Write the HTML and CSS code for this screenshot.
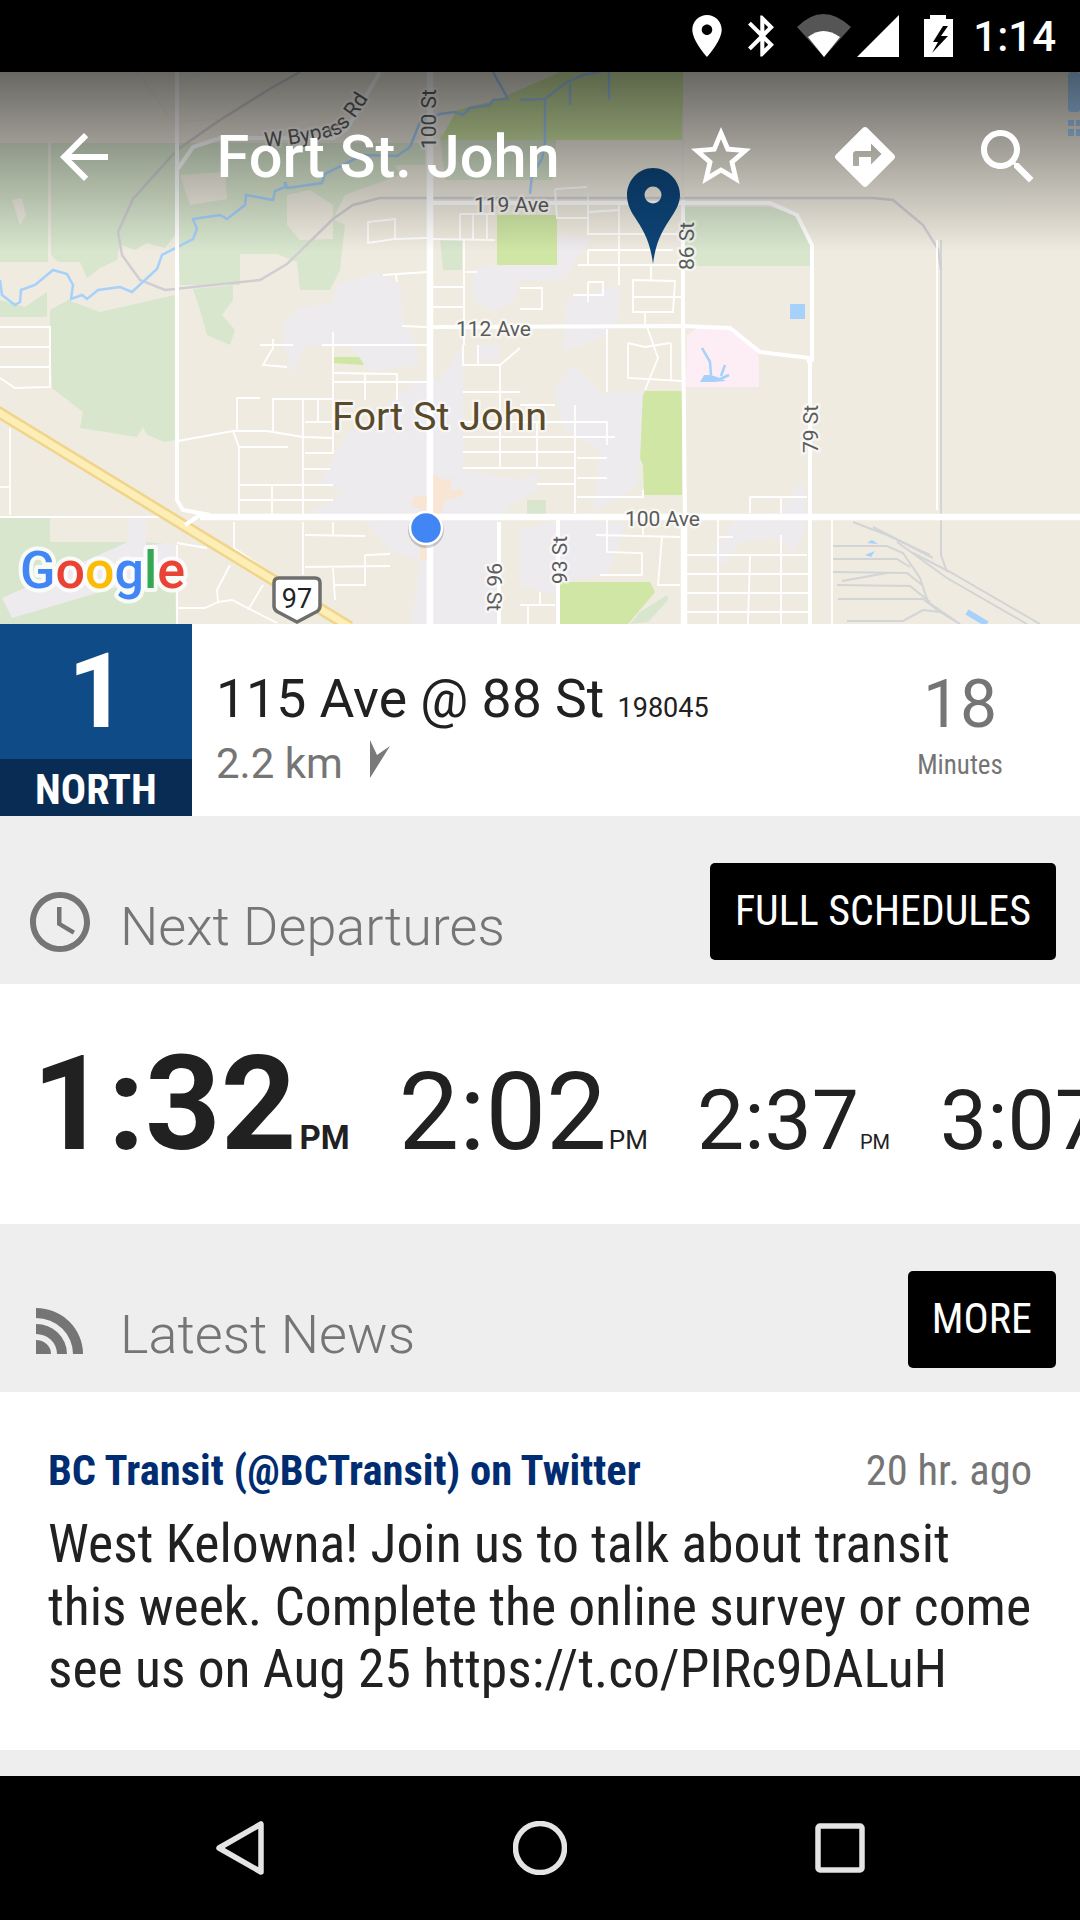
FILE: index.html
```html
<!DOCTYPE html>
<html>
<head>
    <title>Fort St. John</title>
    <link rel="stylesheet" href="styles.css">
</head>
<body>
<div class="phone">
    <div class="status-bar">
        <svg class="st-pin" viewBox="5 2 14 20"><path d="M12 2C8.13 2 5 5.13 5 9c0 5.25 7 13 7 13s7-7.75 7-13c0-3.87-3.13-7-7-7zm0 9.5c-1.38 0-2.5-1.12-2.5-2.5s1.12-2.5 2.5-2.5 2.5 1.12 2.5 2.5-1.12 2.5-2.5 2.5z"/></svg>
        <svg class="st-bt" viewBox="5 2 12.71 20"><path d="M17.71 7.71L12 2h-1v7.59L6.41 5 5 6.41 10.59 12 5 17.59 6.41 19 11 14.41V22h1l5.71-5.71-4.3-4.29 4.3-4.29zM13 5.83l1.88 1.88L13 9.59V5.83zm1.88 10.46L13 18.17v-3.76l1.88 1.88z"/></svg>
        <svg class="st-wifi" viewBox="0 0 54 43"><path class="wifi-back" d="M0 13Q26 -13 54 13L27 43z"/><path d="M11 23Q26 11 43 23L27 43z"/></svg>
        <svg class="st-signal" viewBox="0 0 42 42"><path d="M0 42L42 0V42z"/></svg>
        <svg class="st-battery" viewBox="0 0 29 42"><path d="M6 0H22V4H29V42H0V4H6z"/><path class="bolt" d="M19 11L9 27H14L8 38L24 21H17L24 11z"/></svg>
        <span class="st-time">1:14</span>
    </div>

    <div class="map">
        <svg class="map-svg" viewBox="0 72 1080 552">
            <rect x="0" y="72" width="1080" height="552" fill="#efebe0"/>

            <!-- parks and woods -->
            <g class="m-green">
                <polygon points="0,143 48,143 48,262 0,262"/>
                <polygon points="51,143 175,143 175,235 165,248 147,243 135,250 120,245 117,260 100,268 87,278 80,262 58,262 51,255"/>
                <polygon points="178,143 425,143 425,165 395,165 400,175 345,195 333,219 345,225 340,270 330,290 300,290 297,262 277,254 240,254 240,285 180,285 178,235"/>
                <polygon points="193,289 233,285 233,300 222,315 235,330 230,345 207,335 200,310"/>
                <polygon points="50,310 68,300 100,312 175,295 175,440 165,442 147,435 143,427 137,437 80,428 83,412 52,388 50,345"/>
                <polygon points="0,317 47,317 47,292 25,307 0,300"/>
                <polygon points="0,518 50,518 50,542 145,542 175,545 176,624 0,624"/>
                <polygon points="685,207 770,207 797,215 810,245 810,266 685,266"/>
                <polygon points="527,500 546,500 546,514 527,514"/>
                <polygon points="640,612 667,595 668,600 648,622 630,624"/>
                <polygon points="440,135 557,135 552,180 445,180"/>
                <polygon points="440,240 462,240 462,270 443,270"/>
            </g>
            <g class="m-tan">
                <polygon points="180,175 225,172 227,199 190,205"/>
                <polygon points="287,195 310,190 333,205 333,239 300,240 287,225"/>
                <polygon points="12,200 22,198 26,215 20,225"/>
            </g>
            <g class="m-park">
                <polygon points="497,215 557,215 557,265 497,265"/>
                <polygon points="640,402 645,391 682,391 682,495 644,495 643,465 640,458"/>
                <polygon points="560,582 650,582 655,592 628,624 560,624"/>
                <polygon points="333,357 365,357 363,365 333,363"/>
                <polygon points="433,609 468,609 467,620 433,620"/>
                <polygon points="457,110 497,100 560,72 683,72 683,140 440,140"/>
            </g>

            <!-- built up areas -->
            <g class="m-urban">
                <polygon points="283,325 300,309 333,302 337,285 377,272 400,285 403,320 417,345 418,365 370,372 350,345 305,345 293,375 283,345"/>
                <polygon points="347,435 370,420 417,380 440,380 463,345 463,470 520,480 537,472 537,490 520,500 510,505 498,520 495,624 412,624 420,560 390,552 367,522 307,512 333,502 343,492 320,482"/>
                <polygon points="557,235 592,239 577,259 563,280 520,280 515,300 495,312 473,300 473,270 490,265 557,265"/>
                <polygon points="567,299 617,285 620,295 617,322 600,339 563,352"/>
                <polygon points="557,385 573,365 600,393 643,391 640,460 637,485 593,512 593,520 625,525 607,575 560,582 556,595 520,585 520,530 593,512 600,450 565,430 557,405"/>
                <polygon points="713,558 733,522 780,512 797,485 805,485 806,505 805,532 793,552 777,537 740,542 723,565"/>
                <polygon points="2,598 128,542 128,518 146,518 146,545 175,543 175,570 12,618"/>
                <polygon points="478,345 500,345 500,360 478,360"/>
            </g>
            <polygon class="m-pink" points="687,335 697,328 730,328 757,352 759,358 759,387 686,387"/>
            <polygon class="m-airport" points="433,475 445,480 452,478 450,490 463,490 463,496 445,500 440,516 433,516 412,505 413,497 430,495"/>
            <rect class="m-airport" x="420" y="540" width="8" height="20"/>

            <!-- rail and ring road -->
            <g class="m-rail">
                <polyline points="833,546 887,546 903,553 920,578 928,602 960,624"/>
                <polyline points="833,559 897,559 910,567"/>
                <polyline points="833,572 907,573 922,585"/>
                <polyline points="842,581 887,573"/>
                <polyline points="837,585 910,586 930,602"/>
                <polyline points="838,599 923,599 940,612"/>
                <polyline points="847,621 903,621 923,610 940,612 960,624"/>
                <polyline points="853,522 887,535 930,555"/>
                <polyline points="873,527 933,558"/>
                <polyline points="897,542 947,578 1027,624"/>
                <polyline points="913,553 950,572 1040,624"/>
                <polyline points="941,240 941,555 947,572"/>
            </g>
            <polyline class="m-ring" points="300,72 273,87 220,120 177,150 133,199 118,232 122,255 140,280 165,290 260,280 287,264 333,219 353,205 380,198 873,198 893,200 923,225 938,249 941,270"/>

            <!-- water -->
            <g class="m-river">
                <polyline points="0,280 2,295 15,305 20,302 21,290 35,285 53,270 67,274 73,285 71,299 82,295 87,299 98,290 120,287 132,292 157,269 162,255 193,239 197,229 193,219 220,215 227,219 245,205 246,195 273,200 275,191 285,187 285,182 287,188 322,183 325,174 363,155 397,156 410,147 420,122 440,114 455,112 463,115 470,108 490,105 493,100 508,99 493,72"/>
                <polyline points="545,100 545,142 542,159 532,175 530,194"/>
                <polyline points="520,100 545,99 567,82 583,75 600,72"/>
                <polyline points="570,84 570,105"/>
                <polyline points="609,72 609,100"/>
                <polyline points="702,348 710,362 711,375"/>
                <polyline points="721,376 725,365"/>
                <polyline points="718,380 729,375"/>
                <polyline class="m-canal" points="967,612 987,624"/>
            </g>
            <polygon class="m-water" points="700,382 704,375 711,375 720,378 726,381 713,382"/>
            <rect class="m-water" x="790" y="304" width="15" height="15"/>
            <polygon class="m-water" points="867,543 872,540 878,544"/>
            <polygon class="m-water" points="865,555 875,551 871,557"/>
            <rect class="m-water" x="1068" y="72" width="12" height="40" rx="3"/>
            <rect class="m-water" x="1068" y="120" width="6" height="6"/>
            <rect class="m-water" x="1076" y="120" width="4" height="6"/>
            <rect class="m-water" x="1068" y="129" width="6" height="7"/>
            <rect class="m-water" x="1076" y="129" width="4" height="7"/>

            <!-- small streets -->
            <g class="m-street">
                <polyline points="0,327 50,327 50,387 15,388 0,378"/>
                <polyline points="0,347 50,347"/>
                <polyline points="0,367 50,367"/>
                <polyline points="10,428 10,515"/>
                <polyline points="0,487 10,487"/>
                <polyline points="0,517 175,517"/>
                <polygon points="368,222 395,219 395,239 368,243"/>
                <polyline points="395,239 427,238"/>
                <polyline points="430,239 495,240"/>
                <polyline points="460,214 495,214"/>
                <polyline points="460,214 460,239"/>
                <polyline points="473,214 473,239"/>
                <polyline points="487,214 487,239"/>
                <polyline points="464,240 464,345"/>
                <polyline points="430,287 464,287"/>
                <polyline points="430,307 464,307"/>
                <polyline points="464,272 477,272"/>
                <polyline points="383,275 427,272"/>
                <polyline points="396,275 397,282"/>
                <polyline points="402,326 427,327"/>
                <polyline points="260,345 293,345"/>
                <polyline points="273,339 273,348 263,365 287,367"/>
                <polyline points="322,345 427,345"/>
                <polyline points="333,332 333,453 305,453"/>
                <polyline points="333,373 397,374 397,400"/>
                <polyline points="365,374 365,400"/>
                <polyline points="333,382 427,382"/>
                <polyline points="237,431 237,398 260,398"/>
                <polyline points="273,432 273,399 333,399"/>
                <polyline points="318,400 318,422"/>
                <polyline points="303,400 303,515"/>
                <polyline points="305,422 333,422"/>
                <polyline points="178,441 233,431 267,431 303,437 333,438"/>
                <polyline points="233,431 239,447 239,515"/>
                <polyline points="239,447 288,447"/>
                <polyline points="303,469 330,469"/>
                <polyline points="240,485 333,485"/>
                <polyline points="240,500 333,500"/>
                <polyline points="272,485 272,515"/>
                <polyline points="463,345 463,365 500,365 520,348"/>
                <polyline points="478,345 478,365"/>
                <polyline points="500,365 500,468"/>
                <polyline points="463,392 520,392"/>
                <polyline points="463,422 607,422 607,445"/>
                <polyline points="463,437 615,437"/>
                <polyline points="463,452 575,452"/>
                <polyline points="463,468 575,468"/>
                <polyline points="520,405 555,405"/>
                <polyline points="575,405 575,513"/>
                <polyline points="537,422 537,468"/>
                <polyline points="577,458 607,458"/>
                <polyline points="577,478 607,478"/>
                <polyline points="537,484 575,484"/>
                <polyline points="577,497 643,497 643,490"/>
                <polyline points="607,329 607,392"/>
                <polyline points="628,343 628,378 682,381"/>
                <polyline points="647,327 658,358 645,390"/>
                <polyline points="628,343 645,347 670,343"/>
                <polyline points="671,343 671,380"/>
                <polyline points="555,189 587,187"/>
                <polyline points="555,189 557,218 588,218"/>
                <polyline points="588,171 588,234 680,234"/>
                <polyline points="588,212 620,210"/>
                <polyline points="619,205 619,285"/>
                <polyline points="588,250 673,250"/>
                <polyline points="588,250 588,265"/>
                <polyline points="578,265 683,265"/>
                <polyline points="651,265 651,280"/>
                <polygon points="633,280 675,281 673,312 633,312"/>
                <polyline points="633,297 683,297"/>
                <polyline points="645,312 645,325"/>
                <polyline points="588,282 603,282 603,295 573,295"/>
                <polyline points="588,282 588,302"/>
                <polyline points="520,288 542,288 542,309 520,309"/>
                <polyline points="596,535 680,537"/>
                <polyline points="607,520 607,552 642,553 642,575 600,575"/>
                <polyline points="643,527 643,535"/>
                <polyline points="662,537 658,585 680,585"/>
                <polyline points="520,605 555,605"/>
                <polyline points="528,605 528,624"/>
                <polyline points="540,592 540,605"/>
                <polyline points="718,520 718,624"/>
                <polyline points="687,555 807,555"/>
                <polyline points="687,574 808,574"/>
                <polyline points="687,593 810,593"/>
                <polyline points="687,612 810,612"/>
                <polyline points="750,555 748,624"/>
                <polyline points="781,535 781,624"/>
                <polyline points="718,537 733,537"/>
                <polyline points="750,513 750,497 807,497"/>
                <polyline points="781,497 781,513"/>
                <polyline points="832,520 832,624"/>
                <polyline points="234,522 234,548 277,577"/>
                <polyline points="303,522 303,575"/>
                <polyline points="305,535 365,536"/>
                <polyline points="333,522 333,535"/>
                <polyline points="365,555 390,554"/>
                <polyline points="365,555 365,585 335,585"/>
                <polyline points="305,567 390,566"/>
                <polyline points="333,568 335,600"/>
                <polyline points="177,543 207,548"/>
                <polyline points="230,565 217,590 218,602 205,608 177,608"/>
                <polyline points="218,602 232,600 277,623"/>
                <polyline points="263,585 248,610"/>
                <polyline points="177,545 177,624"/>
                <polyline points="937,240 937,510"/>
            </g>
            <g class="m-faint">
                <polyline points="138,72 177,128"/>
                <polyline points="177,82 207,72"/>
                <polyline points="177,122 220,119"/>
                <polyline points="683,110 683,200"/>
                <polyline points="588,171 588,200"/>
            </g>

            <!-- main roads -->
            <polyline class="m-hw-edge" points="-5,410 350,627"/>
            <polyline class="m-hw" points="-5,410 350,627"/>
            <g class="m-road">
                <polyline points="177,72 177,500 183,510 210,515"/>
                <polyline points="185,525 200,515"/>
                <polyline class="m-main" points="200,517 1080,517"/>
                <polyline class="m-main" points="430,72 430,624"/>
                <polyline points="177,170 193,147 220,138 333,138 347,129 380,72"/>
                <polyline points="430,203 770,203 797,215 812,245 812,360 807,362"/>
                <polyline points="683,200 683,320 685,520"/>
                <polyline class="m-main" points="684,517 684,624"/>
                <polyline points="430,327 683,326 730,328 760,352 810,358"/>
                <polyline points="810,360 810,624"/>
                <polyline points="558,520 558,624"/>
                <polyline points="499,522 499,624"/>
            </g>

            <!-- labels -->
            <defs><path id="bypass" d="M265 147Q300 145 337 135Q352 128 378 82"/></defs>
            <g class="m-label">
                <text font-size="21"><textPath href="#bypass">W Bypass Rd</textPath></text>
                <text font-size="21" transform="translate(436 149) rotate(-90)">100 St</text>
                <text font-size="21" x="474" y="212">119 Ave</text>
                <text font-size="21" transform="translate(694 270) rotate(-90)">86 St</text>
                <text font-size="21" x="456" y="336">112 Ave</text>
                <text font-size="21" transform="translate(818 453) rotate(-90)">79 St</text>
                <text font-size="21" x="625" y="526">100 Ave</text>
                <text font-size="21" transform="translate(567 584) rotate(-90)">93 St</text>
                <text font-size="21" transform="translate(487 563) rotate(90)">96 St</text>
            </g>
            <text class="m-city" x="332" y="430">Fort St John</text>

            <text class="m-google" x="20" y="588"><tspan fill="#4285f4">G</tspan><tspan fill="#ea4335">o</tspan><tspan fill="#fbbc05">o</tspan><tspan fill="#4285f4">g</tspan><tspan fill="#34a853">l</tspan><tspan fill="#ea4335">e</tspan></text>

            <path class="m-shield" d="M279 578H315Q320 578 320 583V606Q320 610 316 612L297 622L278 612Q274 610 274 606V583Q274 578 279 578z"/>
            <text class="m-shield-text" x="297" y="608">97</text>

            <circle cx="426" cy="530" r="18" fill="#000" opacity="0.18"/>
            <circle class="m-dot" cx="426" cy="528" r="16"/>

            <path class="m-pin" fill-rule="evenodd" d="M653 264C650 240 643 230 634 216C630 210 627 203 627 195C627 181 638 168 653 168C668 168 680 181 680 195C680 203 676 210 672 216C663 230 656 240 653 264zM653 186.500A8.500 8.500 0 1 0 653 203.500A8.500 8.500 0 1 0 653 186.500z"/>
        </svg>
        <div class="map-shade"></div>
        <div class="toolbar">
            <svg class="tb-icon tb-back" viewBox="0 0 24 24"><path d="M20 11H7.83l5.59-5.59L12 4l-8 8 8 8 1.41-1.41L7.83 13H20v-2z"/></svg>
            <div class="tb-title">Fort St. John</div>
            <svg class="tb-icon" viewBox="0 0 24 24"><path d="M22 9.240l-7.190-.62L12 2 9.190 8.630 2 9.240l5.460 4.730L5.820 21 12 17.270 18.180 21l-1.630-7.030L22 9.240zM12 15.400l-3.760 2.270 1-4.280-3.320-2.880 4.380-.38L12 6.100l1.710 4.040 4.380.38-3.320 2.880 1 4.280L12 15.400z"/></svg>
            <svg class="tb-icon" viewBox="0 0 24 24"><path d="M21.710 11.290l-9-9c-.39-.39-1.020-.39-1.410 0l-9 9c-.39.39-.39 1.020 0 1.410l9 9c.39.39 1.020.39 1.410 0l9-9c.39-.38.39-1.010 0-1.410zM14 14.500V12h-4v3H8v-4c0-.55.45-1 1-1h5V7.500l3.500 3.500-3.500 3.500z"/></svg>
            <svg class="tb-icon" viewBox="0 0 24 24"><path d="M15.500 14h-.79l-.28-.27C15.410 12.590 16 11.110 16 9.500 16 5.910 13.090 3 9.500 3S3 5.910 3 9.500 5.910 16 9.500 16c1.610 0 3.090-.59 4.230-1.570l.27.28v.79l5 4.990L20.490 19l-4.990-5zm-6 0C7.010 14 5 11.990 5 9.500S7.010 5 9.500 5 14 7.010 14 9.500 11.990 14 9.500 14z"/></svg>
        </div>
    </div>

    <div class="stop-row">
        <div class="route-badge">
            <div class="route-num">1</div>
            <div class="route-dir">NORTH</div>
        </div>
        <div class="stop-info">
            <div class="stop-name">115 Ave @ 88 St <span class="stop-code">198045</span></div>
            <div class="stop-dist">2.2 km
                <svg class="dist-arrow" viewBox="0 0 21 38"><path d="M1 0L8 15L21 6L1 38z"/></svg>
            </div>
        </div>
        <div class="stop-eta">
            <div class="eta-num">18</div>
            <div class="eta-unit">Minutes</div>
        </div>
    </div>

    <div class="section-head">
        <svg class="sec-icon" viewBox="0 0 24 24"><path d="M11.990 2C6.470 2 2 6.480 2 12s4.470 10 9.990 10C17.520 22 22 17.520 22 12S17.520 2 11.990 2zM12 20c-4.420 0-8-3.580-8-8s3.580-8 8-8 8 3.580 8 8-3.580 8-8 8zm.5-13H11v6l5.250 3.150.75-1.230-4.500-2.670z"/></svg>
        <div class="sec-title">Next Departures</div>
        <div class="sec-btn">FULL SCHEDULES</div>
    </div>

    <div class="departures">
        <div class="dep dep-next">1:32<span class="dep-pm">PM</span></div>
        <div class="dep dep-second">2:02<span class="dep-pm">PM</span></div>
        <div class="dep dep-later">2:37<span class="dep-pm">PM</span></div>
        <div class="dep dep-later">3:07<span class="dep-pm">PM</span></div>
    </div>

    <div class="section-head">
        <svg class="sec-icon" viewBox="-12 -14 72 72"><path d="M0 0A47 46 0 0 1 47 46H37A37 36 0 0 0 0 10zM0 16A31 30 0 0 1 31 46H21A21 20 0 0 0 0 26zM0 32A15 14 0 0 1 15 46H0z"/></svg>
        <div class="sec-title">Latest News</div>
        <div class="sec-btn sec-btn-more">MORE</div>
    </div>

    <div class="news-item">
        <div class="news-top">
            <span class="news-source">BC Transit (@BCTransit) on Twitter</span>
            <span class="news-age">20 hr. ago</span>
        </div>
        <div class="news-body">West Kelowna! Join us to talk about transit<br>this week. Complete the online survey or come<br>see us on Aug 25 https://t.co/PIRc9DALuH</div>
    </div>

    <div class="spacer"></div>

    <div class="nav-bar">
        <svg class="nav-back" viewBox="0 0 48 54"><path d="M45 3V51L3 27z"/></svg>
        <svg class="nav-home" viewBox="0 0 54 54"><circle cx="27" cy="27" r="24.500"/></svg>
        <svg class="nav-recent" viewBox="0 0 50 50"><rect x="3" y="3" width="44" height="44" rx="2"/></svg>
    </div>
</div>
</body>
</html>
```

FILE: styles.css
```css
html, body {
    margin: 0;
    padding: 0;
}

body {
    width: 1080px;
    height: 1920px;
    overflow: hidden;
    font-family: Roboto, "Noto Sans", sans-serif;
    background: #eeeeee;
}

.phone {
    display: flex;
    flex-direction: column;
    width: 1080px;
    height: 1920px;
}

/* status bar */
.status-bar {
    height: 72px;
    flex: none;
    background: #000;
    display: flex;
    align-items: flex-start;
    padding: 14px 24px 0 0;
    box-sizing: border-box;
    justify-content: flex-end;
}

.status-bar svg {
    fill: #fff;
    display: block;
}

.st-pin {
    width: 30px;
    height: 42px;
    margin: 1px 26px 0 0;
}

.st-bt {
    width: 26px;
    height: 42px;
    margin: 1px 23px 0 0;
}

.st-wifi {
    width: 54px;
    height: 43px;
    margin-right: 6px;
}

.status-bar .wifi-back {
    fill: #555;
}

.st-signal {
    width: 42px;
    height: 42px;
    margin: 1px 25px 0 0;
}

.st-battery {
    width: 29px;
    height: 42px;
    margin: 1px 20px 0 0;
}

.status-bar .bolt {
    fill: #000;
}

.st-time {
    color: #fff;
    font-size: 42px;
    font-weight: 500;
    line-height: 48px;
    margin-top: -1px;
}

/* map */
.map {
    position: relative;
    height: 552px;
    flex: none;
    overflow: hidden;
}

.map-svg {
    display: block;
    width: 1080px;
    height: 552px;
}

.map-svg polyline,
.m-street polygon {
    fill: none;
}

.m-green polygon { fill: #d8e6ce; }
.m-tan polygon { fill: #efebe0; }
.m-park polygon { fill: #cfe6a5; }
.m-urban polygon { fill: #eeebef; }
.m-pink { fill: #fdeef6; }
.m-airport { fill: #f8e5d3; }
.m-water { fill: #a6d1fb; }

.m-river polyline {
    stroke: #a6d1fb;
    stroke-width: 2.500px;
}

.m-river .m-canal {
    stroke-width: 6px;
}

.m-rail polyline {
    stroke: #d2d4d6;
    stroke-width: 2px;
}

.m-ring {
    stroke: #d0ced2;
    stroke-width: 2.500px;
}

.m-street polyline,
.m-street polygon {
    stroke: #fff;
    stroke-width: 1.800px;
}

.m-faint polyline {
    stroke: #e6e6e6;
    stroke-width: 1.500px;
}

.m-road polyline {
    stroke: #fff;
    stroke-width: 4px;
}

.m-road .m-main {
    stroke-width: 6.500px;
}

.m-hw-edge {
    stroke: #f0d48a;
    stroke-width: 12px;
}

.m-hw {
    stroke: #fdeeb5;
    stroke-width: 7px;
}

.m-label text {
    fill: #5c5c5c;
    stroke: rgba(255, 255, 255, 0.55);
    stroke-width: 5px;
    paint-order: stroke;
    stroke-linejoin: round;
}

.m-city {
    font-size: 39.500px;
    fill: #5a4a2c;
    stroke: rgba(255, 255, 255, 0.5);
    stroke-width: 5px;
    paint-order: stroke;
    stroke-linejoin: round;
}

.m-google {
    font-size: 52px;
    font-weight: 500;
    stroke: rgba(255, 255, 255, 0.8);
    stroke-width: 8px;
    paint-order: stroke;
    stroke-linejoin: round;
}

.m-shield {
    fill: #fff;
    stroke: #6e6e6e;
    stroke-width: 3.500px;
}

.m-shield-text {
    font-size: 27px;
    fill: #222;
    text-anchor: middle;
}

.m-dot {
    fill: #4285f4;
    stroke: #fff;
    stroke-width: 2.500px;
}

.m-pin {
    fill: #0d4579;
}

.map-shade {
    position: absolute;
    left: 0;
    top: 0;
    width: 100%;
    height: 180px;
    background: linear-gradient(rgba(0, 0, 0, 0.56), rgba(0, 0, 0, 0));
}

.toolbar {
    position: absolute;
    left: 0;
    top: 49px;
    width: 100%;
    height: 72px;
    display: flex;
    align-items: center;
    gap: 71.500px;
    padding: 0 36px 0 48px;
    box-sizing: border-box;
}

.tb-icon {
    width: 72px;
    height: 72px;
    flex: none;
    fill: #fff;
}

.tb-back {
    margin-right: 25px;
}

.tb-title {
    flex: 1;
    color: #fff;
    font-size: 59.500px;
    font-weight: 500;
    line-height: 72px;
}

/* stop row */
.stop-row {
    height: 192px;
    flex: none;
    display: flex;
    background: #fff;
}

.route-badge {
    width: 192px;
    flex: none;
    display: flex;
    flex-direction: column;
    color: #fff;
    font-weight: 700;
    text-align: center;
}

.route-num {
    height: 135px;
    box-sizing: border-box;
    padding-left: 3px;
    background: #0f4c87;
    font-size: 103px;
    line-height: 135px;
}

.route-dir {
    height: 57px;
    background: #082c53;
    font-size: 42px;
    line-height: 62px;
    font-stretch: 75%;
}

.stop-info {
    flex: 1;
    padding: 43px 0 0 24px;
}

.stop-name {
    font-size: 53.500px;
    line-height: 64px;
    color: #212121;
}

.stop-code {
    font-size: 27px;
}

.stop-dist {
    font-size: 42px;
    line-height: 50px;
    color: #757575;
    margin-top: -1px;
}

.dist-arrow {
    width: 21px;
    height: 38px;
    margin-left: 16px;
    fill: #7a7a7a;
}

.stop-eta {
    width: 240px;
    flex: none;
    text-align: center;
    color: #757575;
}

.eta-num {
    font-size: 66px;
    line-height: 76px;
    margin-top: 43px;
}

.eta-unit {
    font-size: 27px;
    font-stretch: 75%;
    line-height: 30px;
    margin-top: 7px;
}

/* section headers */
.section-head {
    height: 168px;
    flex: none;
    box-sizing: border-box;
    display: flex;
    align-items: flex-end;
    padding: 0 24px 24px 24px;
    background: #eeeeee;
}

.sec-icon {
    width: 72px;
    height: 72px;
    flex: none;
    fill: #757575;
    margin-bottom: 2px;
}

.sec-title {
    flex: 1;
    margin-left: 24px;
    font-size: 54px;
    font-weight: 300;
    line-height: 60px;
    color: #757575;
    margin-bottom: 3px;
}

.sec-btn {
    height: 97px;
    padding: 0 25px;
    background: #000;
    border-radius: 5px;
    color: #fff;
    font-size: 42px;
    font-stretch: 75%;
    line-height: 96px;
}

.sec-btn-more {
    padding: 0 24px;
}

/* departures */
.departures {
    height: 240px;
    flex: none;
    background: #fff;
    display: flex;
    align-items: baseline;
    overflow: hidden;
    padding: 0 0 0 32px;
    box-sizing: border-box;
    color: #212121;
    white-space: nowrap;
}

.dep {
    flex: none;
    line-height: 1;
}

.dep-next {
    font-size: 132px;
    font-weight: 700;
    margin-top: 54px;
    margin-right: 49px;
}

.dep-next .dep-pm {
    font-size: 33px;
    font-weight: 700;
    margin-left: 3px;
}

.dep-second {
    font-size: 108px;
    margin-right: 49px;
}

.dep-second .dep-pm {
    font-size: 26px;
    margin-left: 2px;
}

.dep-later {
    font-size: 84px;
    margin-right: 50px;
}

.dep-later .dep-pm {
    font-size: 20px;
    margin-left: 1px;
}

/* news */
.news-item {
    height: 358px;
    flex: none;
    box-sizing: border-box;
    padding: 55px 48px 0;
    background: #fff;
    font-stretch: 75%;
}

.news-top {
    display: flex;
    justify-content: space-between;
    font-size: 42.500px;
    line-height: 48px;
}

.news-source {
    font-weight: 700;
    color: #002d72;
}

.news-age {
    color: #757575;
}

.news-body {
    margin-top: 18px;
    font-size: 53.600px;
    line-height: 62.500px;
    color: #212121;
    white-space: nowrap;
}

.spacer {
    height: 26px;
    flex: none;
}

/* nav bar */
.nav-bar {
    flex: 1;
    background: #000;
    display: flex;
    align-items: flex-start;
    padding-top: 45px;
    box-sizing: border-box;
}

.nav-bar svg {
    fill: none;
    stroke: #e4e4e4;
    stroke-width: 5.500px;
    stroke-linejoin: round;
    flex: none;
}

.nav-back {
    width: 48px;
    height: 54px;
    margin-left: 216px;
}

.nav-home {
    width: 54px;
    height: 54px;
    margin-left: 249px;
}

.nav-recent {
    width: 50px;
    height: 50px;
    margin: 2px 0 0 248px;
}
```
